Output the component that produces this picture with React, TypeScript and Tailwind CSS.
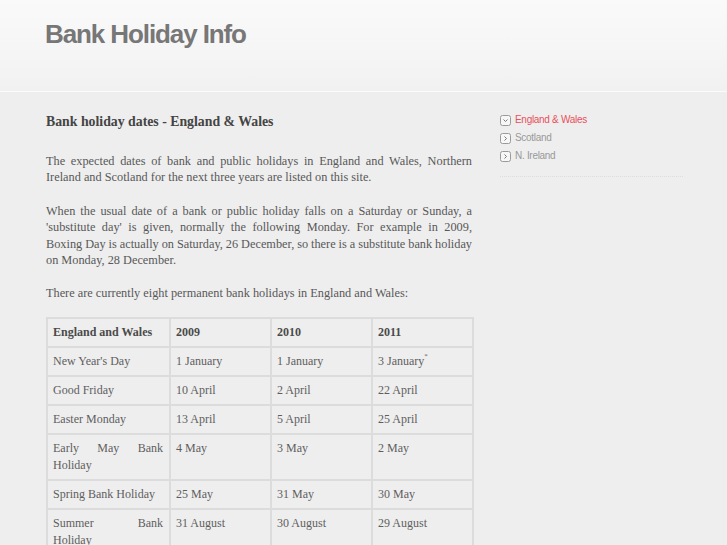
import React from "react";

const rows: [string, string, string, React.ReactNode][] = [
  ["New Year's Day", "1 January", "1 January", <>3 January<sup className="text-[7px] align-[3px]">*</sup></>],
  ["Good Friday", "10 April", "2 April", "22 April"],
  ["Easter Monday", "13 April", "5 April", "25 April"],
  ["Early May Bank Holiday", "4 May", "3 May", "2 May"],
  ["Spring Bank Holiday", "25 May", "31 May", "30 May"],
  ["Summer Bank Holiday", "31 August", "30 August", "29 August"],
  ["Christmas Day", "25 December", "27 December*", "26 December*"],
  ["Boxing Day", "28 December*", "28 December*", "27 December*"],
];

function Icon({ open }: { open?: boolean }) {
  return (
    <svg width="11" height="11" viewBox="0 0 11 11" className="shrink-0">
      <rect x="0.5" y="0.5" width="10" height="10" rx="2" fill="#f7f7f7" stroke="#9a9a9a" />
      {open ? (
        <path d="M3.5 4.5 L5.5 6.5 L7.5 4.5" fill="none" stroke="#777" strokeWidth="1" />
      ) : (
        <path d="M4.5 3.5 L6.5 5.5 L4.5 7.5" fill="none" stroke="#777" strokeWidth="1" />
      )}
    </svg>
  );
}

export default function App() {
  const serif = { fontFamily: '"Liberation Serif", "Times New Roman", serif' };
  return (
    <div className="min-h-screen bg-[#eeeeee]" style={serif}>
      <header className="h-[92px] bg-gradient-to-b from-[#fafafa] via-[#f6f6f6] to-[#f1f1f1] border-b border-[#fbfbfb] pl-[45px] pt-[19px]">
        <h1
          className="text-[26px] leading-[30px] font-bold text-[#777777] tracking-[-1.1px]"
          style={{ fontFamily: '"Liberation Sans", Arial, sans-serif' }}
        >
          Bank Holiday Info
        </h1>
      </header>
      <div className="flex pl-[46px] pt-[21px] gap-[28px]">
        <main className="w-[426px] shrink-0 text-[#585858]">
          <h2 className="text-[13.8px] leading-[18px] font-bold text-[#444444] mb-[22px]">
            Bank holiday dates - England &amp; Wales
          </h2>
          <p className="text-[12.3px] leading-[16.4px] text-justify mb-[17px]">
            The expected dates of bank and public holidays in England and Wales, Northern Ireland and Scotland for the next three years are listed on this site.
          </p>
          <p className="text-[12.3px] leading-[16.4px] text-justify mb-[17px]">
            When the usual date of a bank or public holiday falls on a Saturday or Sunday, a 'substitute day' is given, normally the following Monday. For example in 2009,{" "}
            <span className="[word-spacing:-1.2px]">Boxing Day is actually on Saturday, 26 December, so there is a substitute bank holiday</span>{" "}
            on Monday, 28 December.
          </p>
          <p className="text-[12.3px] leading-[16.4px] mb-[15px]">
            There are currently eight permanent bank holidays in England and Wales:
          </p>
          <table className="w-[426px] border-collapse border-2 border-[#dcdcdc] text-[12px] leading-[17px] table-fixed text-[#5e5e5e]">
            <colgroup>
              <col className="w-[123px]" />
              <col className="w-[101px]" />
              <col className="w-[101px]" />
              <col className="w-[101px]" />
            </colgroup>
            <thead>
              <tr>
                {["England and Wales", "2009", "2010", "2011"].map((h) => (
                  <th key={h} className="border-2 border-[#dcdcdc] pl-[5px] pr-[6px] py-[5px] text-left font-bold text-[#4a4a4a] align-top">
                    {h}
                  </th>
                ))}
              </tr>
            </thead>
            <tbody>
              {rows.map((r, i) => (
                <tr key={i}>
                  {r.map((c, j) => (
                    <td key={j} className="border-2 border-[#dcdcdc] pl-[5px] pr-[6px] py-[5px] align-top text-justify [text-align-last:left]">
                      {c}
                    </td>
                  ))}
                </tr>
              ))}
            </tbody>
          </table>
        </main>
        <aside
          className="w-[183px] shrink-0 -mt-[2px]"
          style={{ fontFamily: '"Liberation Sans", Arial, sans-serif' }}
        >
          <ul className="text-[10px] leading-[18px] tracking-[-0.3px] pb-[11px] border-b border-dotted border-[#dddddd]">
            <li className="flex items-center gap-[4px] text-[#e8505b]">
              <Icon open />
              England &amp; Wales
            </li>
            <li className="flex items-center gap-[4px] text-[#999999]">
              <Icon />
              Scotland
            </li>
            <li className="flex items-center gap-[4px] text-[#999999]">
              <Icon />
              N. Ireland
            </li>
          </ul>
        </aside>
      </div>
    </div>
  );
}
